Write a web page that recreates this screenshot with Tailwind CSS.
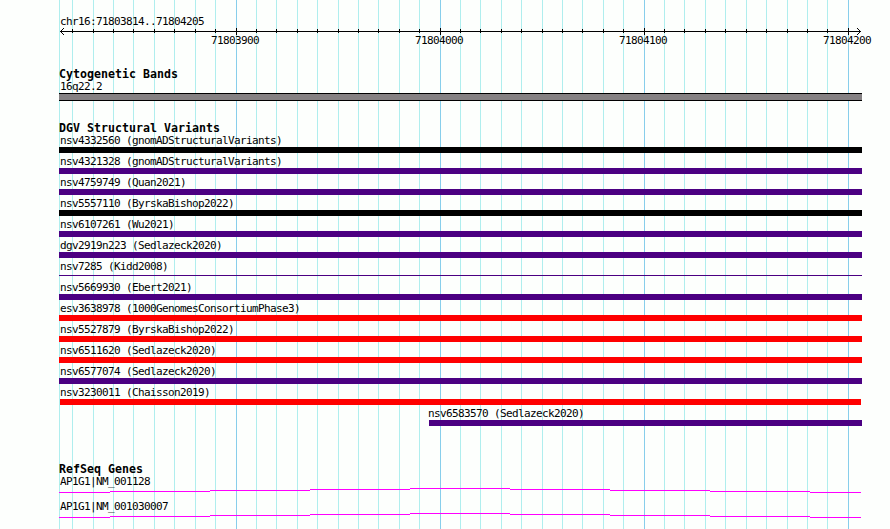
<!DOCTYPE html>
<html lang="en">
<head>
<meta charset="utf-8">
<title>chr16:71803814..71804205</title>
<script src="https://cdn.jsdelivr.net/npm/@tailwindcss/browser@4"></script>
</head>
<body class="bg-[#fdfffd]">
<main class="relative isolate flex h-[529px] w-[890px] flex-col overflow-hidden pl-[59px] font-['DejaVu_Sans_Mono','Liberation_Mono',monospace] text-[11px] leading-[17px] tracking-[-0.622px] whitespace-nowrap text-black">
  <!-- coordinate grid -->
  <svg class="absolute inset-0 -z-10" width="890" height="529" shape-rendering="crispEdges" fill="none">
    <path stroke="#afeeee" d="M59.5 0V529M72.5 0V529M93.5 0V529M113.5 0V529M133.5 0V529M154.5 0V529M174.5 0V529M195.5 0V529M215.5 0V529M256.5 0V529M276.5 0V529M297.5 0V529M317.5 0V529M338.5 0V529M358.5 0V529M378.5 0V529M399.5 0V529M419.5 0V529M460.5 0V529M480.5 0V529M501.5 0V529M521.5 0V529M542.5 0V529M562.5 0V529M582.5 0V529M603.5 0V529M623.5 0V529M664.5 0V529M684.5 0V529M705.5 0V529M725.5 0V529M746.5 0V529M766.5 0V529M787.5 0V529M807.5 0V529M827.5 0V529"/>
    <path stroke="#87ceeb" d="M236.5 0V529M440.5 0V529M644.5 0V529M848.5 0V529"/>
  </svg>

  <!-- scale -->
  <header class="h-[66px] pt-[13px]">
    <div class="h-[15px] pl-px">chr16:71803814..71804205</div>
    <svg class="block" width="810" height="7" viewBox="59 28 810 7" shape-rendering="crispEdges" fill="none" stroke="#000">
      <path d="M60 31.5H861"/>
      <path d="M72.5 29V33M93.5 29V33M113.5 29V33M133.5 29V33M154.5 29V33M174.5 29V33M195.5 29V33M215.5 29V33M256.5 29V33M276.5 29V33M297.5 29V33M317.5 29V33M338.5 29V33M358.5 29V33M378.5 29V33M399.5 29V33M419.5 29V33M460.5 29V33M480.5 29V33M501.5 29V33M521.5 29V33M542.5 29V33M562.5 29V33M582.5 29V33M603.5 29V33M623.5 29V33M664.5 29V33M684.5 29V33M705.5 29V33M725.5 29V33M746.5 29V33M766.5 29V33M787.5 29V33M807.5 29V33M827.5 29V33"/>
      <path d="M236.5 28V35M440.5 28V35M644.5 28V35M848.5 28V35"/>
      <path shape-rendering="auto" d="M64 28L60.5 31.5L64 35M857 28L860.5 31.5L857 35"/>
    </svg>
    <div class="-mt-[3px] flex gap-[156px] pl-[152px]"><span class="w-12">71803900</span><span class="w-12">71804000</span><span class="w-12">71804100</span><span class="w-12">71804200</span></div>
  </header>

  <section class="h-[54px]">
    <h2 class="h-[12px] text-[11.6px] font-bold tracking-[0.016px]">Cytogenetic Bands</h2>
    <div class="h-[15px] pl-px">16q22.2</div>
    <div class="h-2 w-[803px] border-y border-black bg-[#858183]"></div>
  </section>

  <section class="h-[341px]">
    <h2 class="h-[12px] text-[11.6px] font-bold tracking-[0.016px]">DGV Structural Variants</h2>
    <div class="h-[15px] pl-px">nsv4332560 (gnomADStructuralVariants)</div><div class="h-1.5 w-[803px] bg-black"></div>
    <div class="h-[15px] pl-px">nsv4321328 (gnomADStructuralVariants)</div><div class="h-1.5 w-[803px] bg-[#4b0082]"></div>
    <div class="h-[15px] pl-px">nsv4759749 (Quan2021)</div><div class="h-1.5 w-[803px] bg-[#4b0082]"></div>
    <div class="h-[15px] pl-px">nsv5557110 (ByrskaBishop2022)</div><div class="h-1.5 w-[803px] bg-black"></div>
    <div class="h-[15px] pl-px">nsv6107261 (Wu2021)</div><div class="h-1.5 w-[803px] bg-[#4b0082]"></div>
    <div class="h-[15px] pl-px">dgv2919n223 (Sedlazeck2020)</div><div class="h-1.5 w-[803px] bg-[#4b0082]"></div>
    <div class="h-[15px] pl-px">nsv7285 (Kidd2008)</div><div class="h-1.5 w-[803px] pt-0.5"><div class="h-px bg-[#4b0082]"></div></div>
    <div class="h-[15px] pl-px">nsv5669930 (Ebert2021)</div><div class="h-1.5 w-[803px] bg-[#4b0082]"></div>
    <div class="h-[15px] pl-px">esv3638978 (1000GenomesConsortiumPhase3)</div><div class="h-1.5 w-[803px] bg-[#ff0000]"></div>
    <div class="h-[15px] pl-px">nsv5527879 (ByrskaBishop2022)</div><div class="h-1.5 w-[803px] bg-[#ff0000]"></div>
    <div class="h-[15px] pl-px">nsv6511620 (Sedlazeck2020)</div><div class="h-1.5 w-[803px] bg-[#ff0000]"></div>
    <div class="h-[15px] pl-px">nsv6577074 (Sedlazeck2020)</div><div class="h-1.5 w-[803px] bg-[#4b0082]"></div>
    <div class="h-[15px] pl-px">nsv3230011 (Chaisson2019)</div><div class="ml-px h-1.5 w-[801px] bg-[#ff0000]"></div>
    <div class="h-[15px] pl-[369px]">nsv6583570 (Sedlazeck2020)</div><div class="ml-[370px] h-1.5 w-[433px] bg-[#4b0082]"></div>
  </section>

  <section>
    <h2 class="h-[12px] text-[11.6px] font-bold tracking-[0.016px]">RefSeq Genes</h2>
    <div class="h-[15px] pl-px">AP1G1|NM_001128</div>
    <svg class="block" width="802" height="10" viewBox="59 488 802 10" shape-rendering="crispEdges" fill="none" stroke="#ff00ff"><path d="M59 492.5H110M110 491.5H210M210 490.5H310M310 489.5H410M410 488.5H510M510 489.5H610M610 490.5H710M710 491.5H810M810 492.5H861"/></svg>
    <div class="h-[15px] pl-px">AP1G1|NM_001030007</div>
    <svg class="block" width="802" height="10" viewBox="59 488 802 10" shape-rendering="crispEdges" fill="none" stroke="#ff00ff"><path d="M59 492.5H110M110 491.5H210M210 490.5H310M310 489.5H410M410 488.5H510M510 489.5H610M610 490.5H710M710 491.5H810M810 492.5H861"/></svg>
  </section>
</main>
</body>
</html>
